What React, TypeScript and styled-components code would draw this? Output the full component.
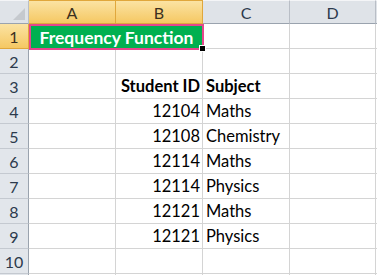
import React from "react";
import styled, { createGlobalStyle, css } from "styled-components";

const GlobalStyle = createGlobalStyle`
  html, body {
    margin: 0;
    padding: 0;
    background: #ffffff;
  }
  body {
    font-family: Lato, "Open Sans", "Liberation Sans", sans-serif;
  }
`;

const Sheet = styled.div`
  display: grid;
  grid-template-columns: 29px 87px 87px 87px 86px 1fr;
  grid-template-rows: 24px repeat(11, 25px);
  width: 377px;
  height: 275px;
  overflow: hidden;
  background: #ffffff;
`;

const selectedHeader = css`
  background: linear-gradient(#fbe3a3, #f5c863);
  border-color: #e0a73c;
  color: #3b3020;
`;

const Corner = styled.div`
  position: relative;
  box-sizing: border-box;
  border-top: 1px solid #f4f5f7;
  border-right: 1px solid #b9bec6;
  border-bottom: 1px solid #9aa3ae;
  background: #dfe3e8;

  &::after {
    content: "";
    position: absolute;
    right: 3px;
    bottom: 3px;
    width: 0;
    height: 0;
    border-left: 12px solid transparent;
    border-bottom: 12px solid #c5c9ce;
  }
`;

const ColHeader = styled.div<{ $selected?: boolean }>`
  box-sizing: border-box;
  display: flex;
  align-items: center;
  justify-content: center;
  border-top: 1px solid #f4f5f7;
  border-right: 1px solid #b9bec6;
  border-bottom: 1px solid #9aa3ae;
  background: #dfe3e8;
  color: #2c3a4c;
  font-size: 16px;
  padding-top: 1px;
  ${({ $selected }) => $selected && selectedHeader}
  ${({ $selected }) => $selected && css`border-bottom-color: #e0a73c;`}
`;

const RowHeader = styled.div<{ $selected?: boolean }>`
  box-sizing: border-box;
  display: flex;
  align-items: center;
  justify-content: center;
  border-right: 1px solid #9aa3ae;
  border-bottom: 1px solid #c4c9d0;
  background: #e2e6eb;
  color: #2c3a4c;
  font-size: 16px;
  padding-top: 1px;
  ${({ $selected }) => $selected && selectedHeader}
  ${({ $selected }) => $selected && css`border-right-color: #e0a73c;`}
`;

const Cell = styled.div<{ $align?: "left" | "right"; $bold?: boolean }>`
  box-sizing: border-box;
  display: flex;
  align-items: flex-end;
  justify-content: ${({ $align }) => ($align === "right" ? "flex-end" : "flex-start")};
  padding: 0 2px 1px 3px;
  border-right: 1px solid #d4d4d4;
  border-bottom: 1px solid #d4d4d4;
  color: #000000;
  font-size: 16.5px;
  line-height: 22px;
  font-weight: ${({ $bold }) => ($bold ? 700 : 400)};
  white-space: nowrap;
  overflow: visible;
`;

const TitleCell = styled.div`
  grid-column: span 2;
  position: relative;
  z-index: 2;
  box-sizing: border-box;
  margin-right: -1px;
  margin-bottom: -1px;
  display: flex;
  align-items: center;
  justify-content: center;
  padding-top: 1px;
  background: #00b050;
  border: 2px solid #e5468c;
  color: #ffffff;
  font-size: 17.5px;
  font-weight: 700;
  white-space: nowrap;

  &::after {
    content: "";
    position: absolute;
    right: -4px;
    bottom: -4px;
    width: 5px;
    height: 5px;
    background: #000000;
    border: 1px solid #ffffff;
  }
`;

const columns = ["A", "B", "C", "D"];

const students = [
  { id: "12104", subject: "Maths" },
  { id: "12108", subject: "Chemistry" },
  { id: "12114", subject: "Maths" },
  { id: "12114", subject: "Physics" },
  { id: "12121", subject: "Maths" },
  { id: "12121", subject: "Physics" },
];

function EmptyRow({ n }: { n?: number }) {
  return (
    <>
      <RowHeader>{n}</RowHeader>
      <Cell />
      <Cell />
      <Cell />
      <Cell />
      <Cell />
    </>
  );
}

export default function App() {
  return (
    <>
      <GlobalStyle />
      <Sheet>
        <Corner />
        {columns.map((c) => (
          <ColHeader key={c} $selected={c === "A" || c === "B"}>
            {c}
          </ColHeader>
        ))}
        <ColHeader />

        <RowHeader $selected>1</RowHeader>
        <TitleCell>Frequency Function</TitleCell>
        <Cell />
        <Cell />
        <Cell />

        <EmptyRow n={2} />

        <RowHeader>3</RowHeader>
        <Cell />
        <Cell $align="right" $bold>
          Student ID
        </Cell>
        <Cell $bold>Subject</Cell>
        <Cell />
        <Cell />

        {students.map((s, i) => (
          <React.Fragment key={i}>
            <RowHeader>{i + 4}</RowHeader>
            <Cell />
            <Cell $align="right">{s.id}</Cell>
            <Cell>{s.subject}</Cell>
            <Cell />
            <Cell />
          </React.Fragment>
        ))}

        <EmptyRow n={10} />
        <EmptyRow />
      </Sheet>
    </>
  );
}
